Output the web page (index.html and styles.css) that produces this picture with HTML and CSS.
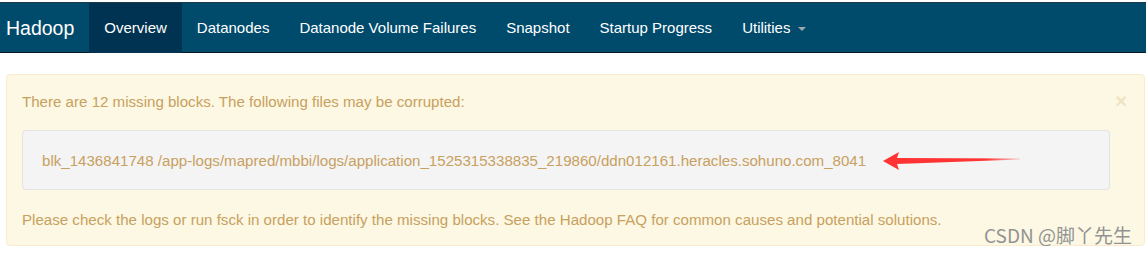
FILE: index.html
```html
<!DOCTYPE html>
<html lang="en">

<head>
    <meta charset="UTF-8" />
    <meta name="viewport" content="width=device-width, initial-scale=1.0" />
    <title>Namenode information</title>
    <link rel="stylesheet" href="styles.css">
</head>

<body>
    <header class="navbar">
        <a class="brand" href="#">Hadoop</a>
        <ul class="nav">
            <li class="active"><a href="#">Overview</a></li>
            <li><a href="#">Datanodes</a></li>
            <li><a href="#">Datanode Volume Failures</a></li>
            <li><a href="#">Snapshot</a></li>
            <li><a href="#">Startup Progress</a></li>
            <li><a href="#">Utilities <span class="caret"></span></a></li>
        </ul>
    </header>

    <div class="container">
        <div class="alert">
            <span class="close">&times;</span>
            <p>There are 12 missing blocks. The following files may be corrupted:</p>
            <div class="well">
                blk_1436841748 /app-logs/mapred/mbbi/logs/application_1525315338835_219860/ddn012161.heracles.sohuno.com_8041
                <svg class="arrow" width="140" height="20" viewBox="0 0 140 20">
                    <defs>
                        <linearGradient id="fade" x1="0" x2="1" y1="0" y2="0">
                            <stop offset="0.75" stop-color="#f33" />
                            <stop offset="1" stop-color="#f33" stop-opacity="0.2" />
                        </linearGradient>
                    </defs>
                    <polygon points="0,10 16,1 14,7 137,7.5 137,8.5 14,13 16,19" fill="url(#fade)" />
                </svg>
            </div>
            <p>Please check the logs or run fsck in order to identify the missing blocks. See the Hadoop FAQ for common causes and potential solutions.</p>
            <span class="watermark">CSDN @脚丫先生</span>
        </div>
    </div>
</body>

</html>
```

FILE: styles.css
```css
* {
    margin: 0;
    padding: 0;
    box-sizing: border-box;
}

body {
    font-family: "Liberation Sans", Arial, sans-serif;
    font-size: 15px;
    background: #fff;
    padding-top: 2px;
}

ul {
    list-style: none;
}

a {
    text-decoration: none;
}

/* 顶部导航 */
.navbar {
    display: flex;
    height: 51px;
    background: #004a6c;
    border-top: 1px solid #1b3a4a;
    border-bottom: 1px solid #0b1a22;
}

.brand {
    color: #fff;
    font-size: 19.5px;
    line-height: 50px;
    padding: 0 15px 0 6px;
}

.nav {
    display: flex;
}

.nav a {
    display: block;
    color: #fff;
    font-size: 15px;
    line-height: 50px;
    padding: 0 15px;
}

.nav .active a {
    background: #003352;
}

.caret {
    display: inline-block;
    width: 0;
    height: 0;
    margin-left: 3px;
    vertical-align: middle;
    border-top: 4px solid #9aa8b0;
    border-left: 4px solid transparent;
    border-right: 4px solid transparent;
}

/* 警告框 */
.container {
    padding: 21px 1px 0 6px;
}

.alert {
    position: relative;
    background: #fcf8e3;
    border: 1px solid #faebcc;
    border-radius: 4px;
    color: #c8a060;
    font-size: 15.1px;
    padding: 17px 15px 15px 15px;
}

.alert p {
    line-height: 20px;
}

.close {
    position: absolute;
    top: 15px;
    right: 17px;
    font-size: 20px;
    font-weight: bold;
    color: #efe3c2;
}

.well {
    position: relative;
    margin: 18px 19px 20px 0;
    height: 60px;
    line-height: 60px;
    padding: 0 19px;
    background: #f4f4f4;
    border: 1px solid #e3e3e3;
    border-radius: 4px;
}

.arrow {
    position: absolute;
    left: 860px;
    top: 20px;
}

.watermark {
    position: absolute;
    right: 12px;
    bottom: -3px;
    font-family: "Noto Sans CJK SC", sans-serif;
    font-size: 19px;
    color: #939393;
}
```
